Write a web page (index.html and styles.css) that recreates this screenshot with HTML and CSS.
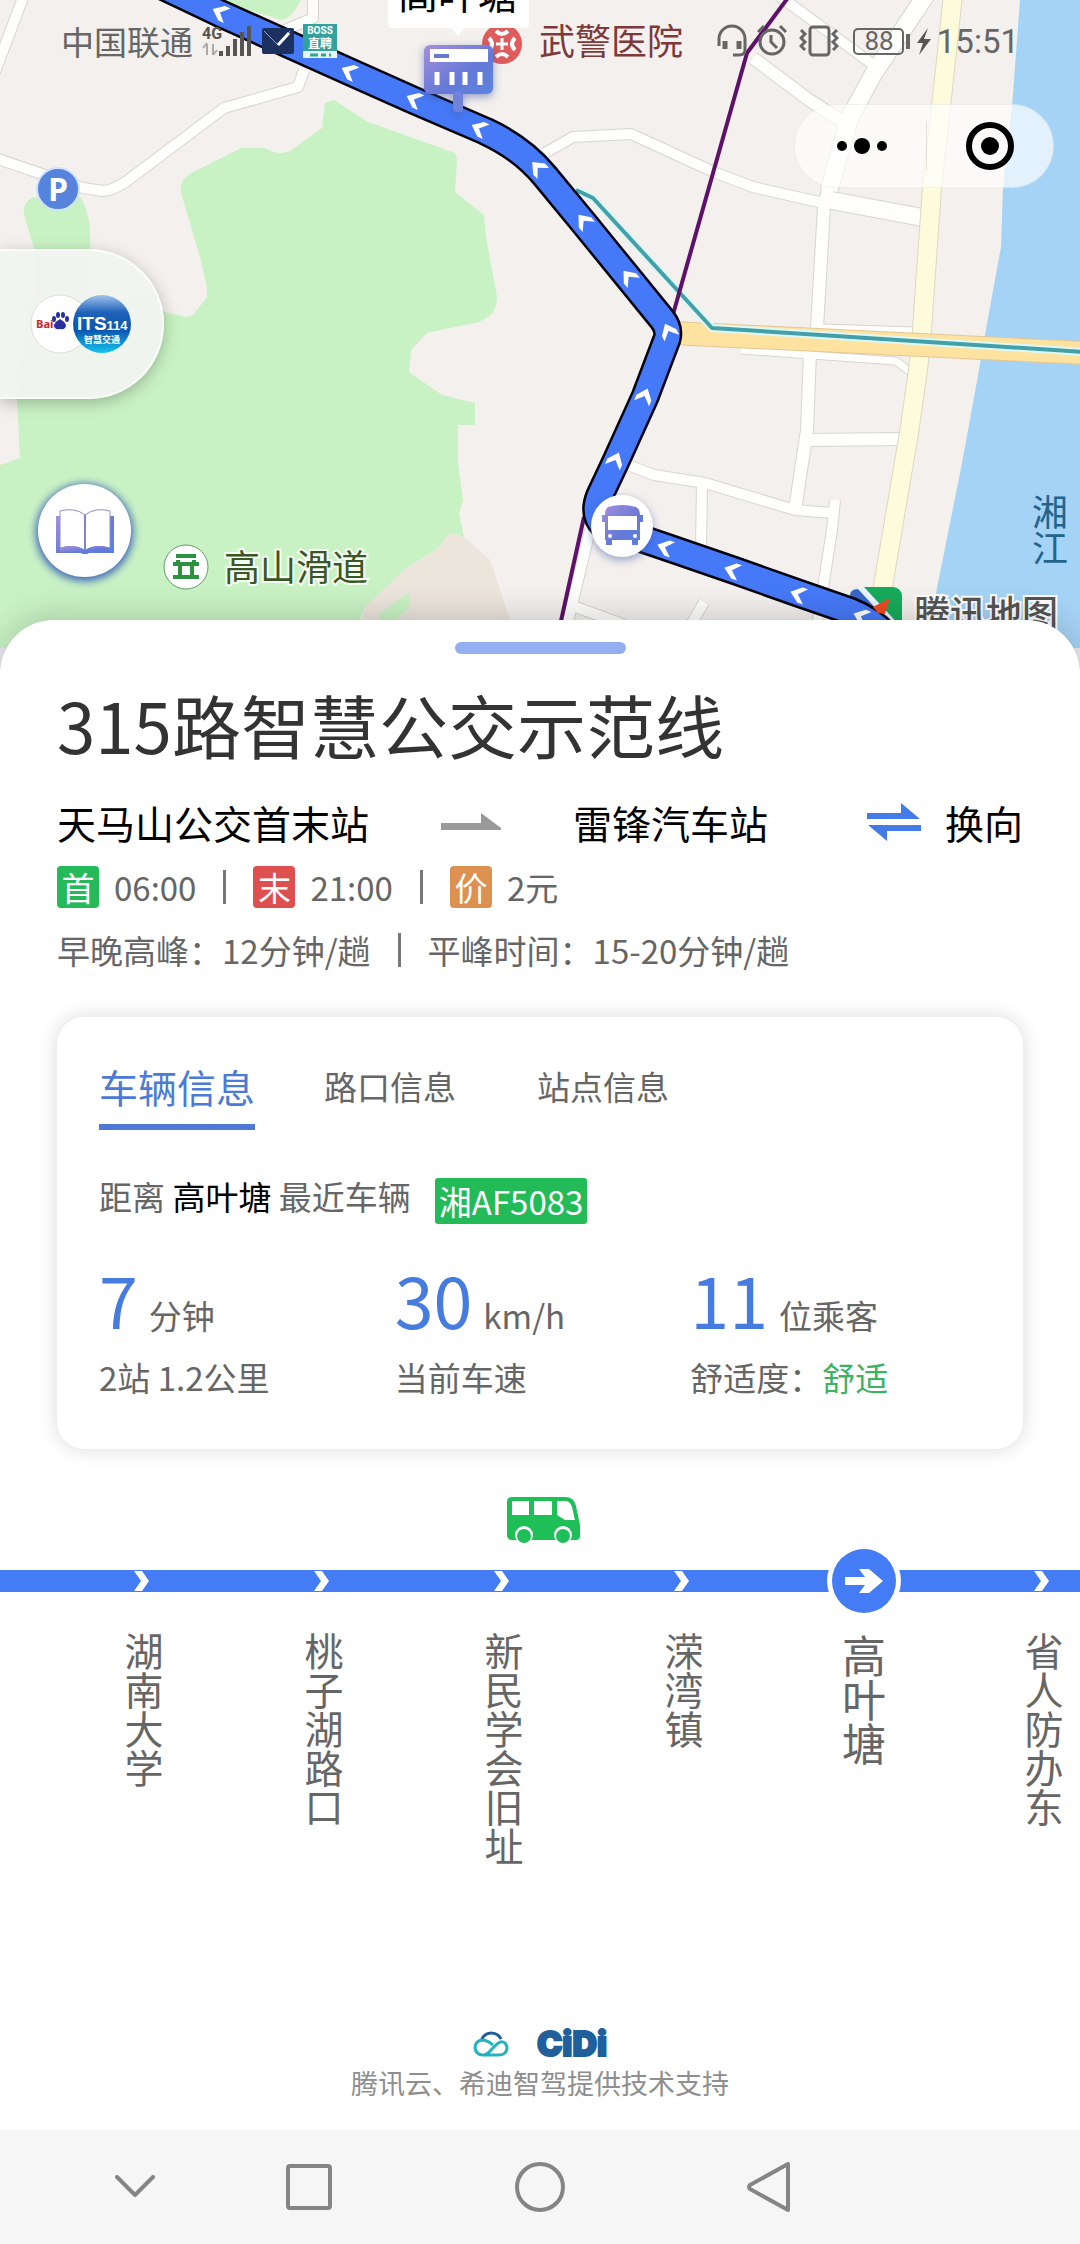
FILE: index.html
```html
<!DOCTYPE html>
<html lang="zh-CN">
<head>
  <meta charset="UTF-8">
  <meta name="viewport" content="width=device-width, initial-scale=1">
  <title>315路智慧公交示范线</title>
  <link rel="stylesheet" href="styles.css">
</head>
<body>

<section class="map">
  <svg class="map-canvas" viewBox="0 0 1080 648" preserveAspectRatio="xMidYMin slice">
    <defs>
      <linearGradient id="violet" x1="0" y1="0" x2="1" y2="1">
        <stop offset="0" stop-color="#a58fdc"/>
        <stop offset="0.6" stop-color="#6479d8"/>
        <stop offset="1" stop-color="#5b83e0"/>
      </linearGradient>
      <path id="arrow" d="M-7 0L3 -8H9L1 0L9 8H3Z"/>
    </defs>

    <!-- green areas -->
    <g class="green">
      <path d="M215 0L281 20Q292 18 301 0Z"/>
      <path d="M33 197Q22 203 24 215L34 248V300H90V248Q92 215 80 197Z"/>
      <path d="M325 103L334 100L368 122L455 153L457 160L455 192L484 215L486 237L497 297Q496 314 486 318L479 322L427 333L411 350L409 372L442 395L475 403V425H458V463L463 500L459 513L464 537L451 533L436 550L406 568L396 585L365 607L358 625V648H0V465L20 458L17 398L30 300H150L165 312L186 317L193 315L207 297V287L200 257L181 193Q178 180 193 172L241 148H265Q278 156 290 151L322 128Z"/>
    </g>
    <path class="hill" d="M404 570L436 550L451 533L464 537L490 560L510 620V640H358L365 607Z"/>
    <path class="green" d="M380 613L410 592V607L396 620H380Z"/>
    <path class="water" d="M1020 0L1012 107L1003 187L1001 247L986 329L979 370L962 463L936 593L926 648H1080V0Z"/>

    <!-- roads: grey casing first, then white fill -->
    <g class="road-casing">
      <path class="w10" d="M24 -5L-5 72"/>
      <path class="w10" d="M313 -5V18L285 30M304 70L298 87L224 108L127 181Q112 191 103 191L83 188L-5 158"/>
      <path class="w10" d="M545 153L573 137L631 134L716 173L753 187L819 202"/>
      <path class="w16" d="M829 200L925 218"/>
      <path class="w16" d="M926 -5L874 73L850 117L829 190"/>
      <path class="w12" d="M829 185L824 207L817 328L810 353L807 430L795 510"/>
      <path class="w10" d="M778 -5L871 63"/>
      <path class="w12" d="M753 58L809 100L842 121"/>
      <path class="w8" d="M822 328L914 331M741 350L896 361L914 375"/>
      <path class="w12" d="M808 440L904 439"/>
      <path class="w10" d="M628 465L654 475L705 483L795 510L833 513M702 483L701 548M835 500L832 530L818 620V648"/>
      <path class="w10" d="M570 605L625 625M704 602L685 635M590 530L566 630"/>
    </g>
    <g class="road-fill">
      <path class="w10" d="M24 -5L-5 72"/>
      <path class="w10" d="M313 -5V18L285 30M304 70L298 87L224 108L127 181Q112 191 103 191L83 188L-5 158"/>
      <path class="w10" d="M545 153L573 137L631 134L716 173L753 187L819 202"/>
      <path class="w16" d="M829 200L925 218"/>
      <path class="w16" d="M926 -5L874 73L850 117L829 190"/>
      <path class="w12" d="M829 185L824 207L817 328L810 353L807 430L795 510"/>
      <path class="w10" d="M778 -5L871 63"/>
      <path class="w12" d="M753 58L809 100L842 121"/>
      <path class="w8" d="M822 328L914 331M741 350L896 361L914 375"/>
      <path class="w12" d="M808 440L904 439"/>
      <path class="w10" d="M628 465L654 475L705 483L795 510L833 513M702 483L701 548M835 500L832 530L818 620V648"/>
      <path class="w10" d="M570 605L625 625M704 602L685 635M590 530L566 630"/>
    </g>
    <path class="yellow-casing" d="M953 -5L941 107L932 187L922 330L918 370L909 433L884 580L874 648"/>
    <path class="yellow-fill" d="M953 -5L941 107L932 187L922 330L918 370L909 433L884 580L874 648"/>
    <path class="orange-casing" d="M672 333L1085 353"/>
    <path class="orange-fill" d="M672 333L1085 353"/>

    <!-- metro lines -->
    <path class="teal-halo" d="M576 190L593 198L712 328L1085 352"/>
    <path class="teal" d="M576 190L593 198L712 328L1085 352"/>
    <path class="purple" d="M790 -5L747 53L672 318M584 517L559 630"/>

    <text class="water-label" x="1050" y="494">湘江</text>

    <g class="tencent">
      <rect x="850" y="587" width="52" height="56" rx="9" fill="#17ab5b"/>
      <path d="M850 596Q850 587 859 587H864L902 628V643H850Z" fill="#e8f4ff"/>
      <path d="M850 596Q850 589 858 589L902 637V643H850Z" fill="#3765c8"/>
    </g>

    <!-- bus route -->
    <path class="route-edge" d="M131 -29L219 13L348 71L413 100L485 131Q522 148 545 176L583 222L662 319Q670 329 667 339L645 397L616 461L600 495Q592 514 604 526L666 547L733 570L798 593L850 611Q872 620 884 634"/>
    <path class="route" d="M131 -29L219 13L348 71L413 100L485 131Q522 148 545 176L583 222L662 319Q670 329 667 339L645 397L616 461L600 495Q592 514 604 526L666 547L733 570L798 593L850 611Q872 620 884 634"/>
    <path d="M873 607L890 598L885 614L878 613Z" fill="#f04a23"/>
    <g fill="#fff">
      <use href="#arrow" transform="translate(219 12) rotate(25)"/>
      <use href="#arrow" transform="translate(348 71) rotate(25)"/>
      <use href="#arrow" transform="translate(413 99) rotate(25)"/>
      <use href="#arrow" transform="translate(478 128) rotate(25)"/>
      <use href="#arrow" transform="translate(537 167) rotate(46)"/>
      <use href="#arrow" transform="translate(583 220) rotate(50)"/>
      <use href="#arrow" transform="translate(628 276) rotate(50)"/>
      <use href="#arrow" transform="translate(668 330) rotate(65)"/>
      <use href="#arrow" transform="translate(645 395) rotate(112)"/>
      <use href="#arrow" transform="translate(616 459) rotate(114)"/>
      <use href="#arrow" transform="translate(664 547) rotate(19)"/>
      <use href="#arrow" transform="translate(731 570) rotate(19)"/>
      <use href="#arrow" transform="translate(797 594) rotate(19)"/>
      <use href="#arrow" transform="translate(860 616) rotate(22)"/>
    </g>

    <text class="tencent-label" x="914" y="627">腾讯地图</text>

    <!-- hospital -->
    <circle cx="502" cy="44" r="20" fill="#de5c5b"/>
    <g fill="none" stroke="#fff" stroke-width="4">
      <path d="M496 31Q502 37 508 31M496 57Q502 51 508 57M489 38Q495 44 489 50M515 38Q509 44 515 50"/>
    </g>
    <path d="M502 38V50M496 44H508" stroke="#fff" stroke-width="3"/>
    <text class="hospital-label" x="539" y="55">武警医院</text>

    <!-- parking -->
    <circle cx="58" cy="189" r="21" fill="#5684dc" stroke="#cfe2ff" stroke-width="2"/>
    <text class="parking-label" x="58" y="201">P</text>

    <!-- scenic spot -->
    <circle cx="186" cy="567" r="22" fill="#fff" stroke="#5f9f6c" stroke-width="1"/>
    <path d="M176 556H196M173 564H199M178 560V564M194 560V564M180 566V576M192 566V576M173 577H199" stroke="#2c9240" stroke-width="4" fill="none"/>
    <text class="scenic-label" x="224" y="581">高山滑道</text>

    <!-- selected stop -->
    <path d="M388 0H529V24Q529 28 525 28H465L458 36L451 28H392Q388 28 388 24Z" fill="#fff"/>
    <text class="stop-label" x="458" y="9">高叶塘</text>
    <g class="marker-shadow">
      <rect x="424" y="45" width="69" height="49" rx="6" fill="url(#violet)"/>
      <rect x="453" y="92" width="10" height="20" rx="3" fill="#6f83dc"/>
      <rect x="430" y="49" width="58" height="13" fill="#fff"/>
      <rect x="434" y="54" width="15" height="4" fill="#6a78cc"/>
      <path d="M437 72V85M452 72V85M465 72V85M480 72V85" stroke="#fff" stroke-width="5"/>
    </g>

    <!-- bus on the map -->
    <g class="marker-shadow">
      <circle cx="622" cy="526" r="31" fill="#fff"/>
      <path d="M608 507Q622 503 636 507Q640 509 640 515H643V522H640V540H638V545H632V540H612V545H606V540H605V522H602V515H605Q605 509 608 507Z" fill="url(#violet)"/>
      <rect x="608" y="516" width="29" height="14" fill="#fff"/>
      <circle cx="610" cy="536" r="2" fill="#fff"/>
      <circle cx="635" cy="536" r="2" fill="#fff"/>
    </g>
  </svg>

  <div class="status-bar">
    <span class="carrier">中国联通</span>
    <svg class="signal" width="50" height="34" viewBox="0 0 50 34">
      <text x="0" y="15" class="net">4G</text>
      <path d="M5 31V20M1 24L5 19M11 20V31M11 31L15 26" stroke="#aaa" stroke-width="2" fill="none"/>
      <path d="M19 32V27M26 32V22M33 32V15M40 32V8M47 32V2" stroke="#555" stroke-width="4"/>
    </svg>
    <svg class="mail" width="32" height="26" viewBox="0 0 32 26">
      <rect width="32" height="26" rx="2" fill="#1d3160"/>
      <path d="M2 3L16 17L28 3" stroke="#8fa3cc" stroke-width="1" fill="none"/>
      <path d="M16 17L27 5" stroke="#fff" stroke-width="3"/>
    </svg>
    <svg class="boss" width="34" height="34" viewBox="0 0 34 34">
      <rect width="34" height="34" fill="#33a29c"/>
      <rect y="27" width="34" height="7" fill="#e6f6f5"/>
      <text x="17" y="10" class="boss-text">BOSS</text>
      <text x="17" y="24" class="boss-cn">直聘</text>
      <path d="M7 31H15M18 31H23M26 31H28" stroke="#33a29c" stroke-width="3"/>
    </svg>
    <svg class="headset" width="30" height="34" viewBox="0 0 30 34" fill="none" stroke="#666" stroke-width="3">
      <path d="M2 22V15A13 13 0 0 1 28 15V26Q28 31 22 31H16"/>
      <path d="M8 17V25M22 17V25" stroke-width="5"/>
    </svg>
    <svg class="alarm" width="30" height="34" viewBox="0 0 30 34" fill="none" stroke="#666" stroke-width="3">
      <circle cx="15" cy="18" r="12"/>
      <path d="M14 11V18L20 24M1 8L7 2M29 8L23 2"/>
    </svg>
    <svg class="vibrate" width="40" height="34" viewBox="0 0 40 34" fill="none" stroke="#666" stroke-width="3">
      <rect x="11" y="3" width="19" height="28" rx="3"/>
      <path d="M2 6L6 10L2 14L6 18L2 22L6 26M38 6L34 10L38 14L34 18L38 22L34 26"/>
    </svg>
    <svg class="battery" width="80" height="34" viewBox="0 0 80 34">
      <rect x="1" y="5" width="49" height="25" rx="4" fill="none" stroke="#666" stroke-width="2"/>
      <text x="26" y="26" class="battery-text">88</text>
      <path d="M55 10V25" stroke="#666" stroke-width="4"/>
      <path d="M75 4L64 19H70L66 31L78 15H71Z" fill="#555"/>
    </svg>
    <time class="clock">15:51</time>
  </div>

  <div class="capsule">
    <button class="capsule-btn" aria-label="更多">
      <svg width="52" height="18" viewBox="0 0 52 18"><circle cx="6" cy="9" r="5"/><circle cx="26" cy="9" r="8"/><circle cx="46" cy="9" r="5"/></svg>
    </button>
    <button class="capsule-btn" aria-label="关闭">
      <svg width="48" height="48" viewBox="0 0 48 48"><circle cx="24" cy="24" r="21" fill="none" stroke="#000" stroke-width="6"/><circle cx="24" cy="24" r="9"/></svg>
    </button>
  </div>

  <div class="partners">
    <svg width="102" height="62" viewBox="0 0 102 62">
      <defs>
        <linearGradient id="its" x1="0" y1="0" x2="0" y2="1">
          <stop offset="0" stop-color="#9fc4ec"/>
          <stop offset="0.3" stop-color="#1f62b8"/>
          <stop offset="0.6" stop-color="#0b55b0"/>
          <stop offset="1" stop-color="#14c4ec"/>
        </linearGradient>
      </defs>
      <circle cx="30" cy="31" r="29" fill="#fff" stroke="#ddd"/>
      <text x="6" y="35" class="baidu-red">Bai</text>
      <g fill="#2a2fa0">
        <ellipse cx="24" cy="26" rx="2" ry="3"/><ellipse cx="28" cy="22" rx="2" ry="3"/>
        <ellipse cx="33" cy="22" rx="2" ry="3"/><ellipse cx="37" cy="26" rx="2" ry="3"/>
        <path d="M30 26Q34 28 36 32Q36 37 30 36Q24 37 24 32Q26 28 30 26Z"/>
      </g>
      <circle cx="72" cy="31" r="29" fill="url(#its)"/>
      <text x="47" y="37" class="its">ITS<tspan class="its-small">114</tspan></text>
      <text x="72" y="50" class="its-cn">智慧交通</text>
    </svg>
  </div>

  <button class="guide-btn" aria-label="指南">
    <svg width="60" height="46" viewBox="0 0 60 46">
      <path d="M1 8H6V38H54V8H59V45H34Q30 48 26 45H1Z" fill="url(#violet)"/>
      <path d="M5 3Q20 -1 30 7Q40 -1 55 3V40Q40 36 30 43Q20 36 5 40Z" fill="#fff" stroke="#8d8fc8" stroke-width="1"/>
      <path d="M5 40Q20 35 30 42Q40 35 55 40V44H34L30 46L26 44H5Z" fill="url(#violet)"/>
      <path d="M30 7V42" stroke="#7f83c8" stroke-width="2"/>
    </svg>
  </button>
</section>

<main class="sheet">
  <div class="handle"></div>
  <h1>315路智慧公交示范线</h1>

  <div class="direction">
    <span>天马山公交首末站</span>
    <svg class="to" width="60" height="18" viewBox="0 0 60 18"><path d="M0 10H40V0L60 15V17H0Z" fill="#999"/></svg>
    <span>雷锋汽车站</span>
    <button class="swap">
      <svg width="54" height="38" viewBox="0 0 54 38" fill="#437be8"><path d="M0 10H34V0L53 16H0ZM54 28H20V38L1 22H54Z"/></svg>
      换向
    </button>
  </div>

  <div class="times">
    <span class="badge first">首</span><span class="time">06:00</span>
    <i class="bar"></i>
    <span class="badge last">末</span><span class="time">21:00</span>
    <i class="bar"></i>
    <span class="badge price">价</span><span class="time">2元</span>
  </div>

  <div class="interval">
    <span>早晚高峰：12分钟/趟</span>
    <i class="bar"></i>
    <span>平峰时间：15-20分钟/趟</span>
  </div>

  <section class="card">
    <nav class="tabs">
      <button class="tab active">车辆信息</button>
      <button class="tab">路口信息</button>
      <button class="tab">站点信息</button>
    </nav>
    <div class="nearest">
      <span class="nearest-text">距离 <b>高叶塘</b> 最近车辆</span>
      <span class="plate">湘AF5083</span>
    </div>
    <div class="stats">
      <div class="stat">
        <p class="figure"><strong>7</strong> <span>分钟</span></p>
        <p class="note">2站 1.2公里</p>
      </div>
      <div class="stat">
        <p class="figure"><strong>30</strong> <span>km/h</span></p>
        <p class="note">当前车速</p>
      </div>
      <div class="stat">
        <p class="figure"><strong>11</strong> <span>位乘客</span></p>
        <p class="note">舒适度：<em>舒适</em></p>
      </div>
    </div>
  </section>

  <section class="line">
    <div class="bus-row">
      <svg width="73" height="47" viewBox="0 0 73 47">
        <path d="M5 0H58Q67 0 69 9L73 28V39Q73 43 69 43H5Q0 43 0 38V5Q0 0 5 0Z" fill="#1fbf58"/>
        <path d="M5 4H22V18H5ZM27 4H45V18H27ZM50 4H59Q63 4 65 10L68 23H58L50 18Z" fill="#fff"/>
        <circle cx="17" cy="38" r="9" fill="#fff"/><circle cx="56" cy="38" r="9" fill="#fff"/>
        <circle cx="17" cy="39" r="7" fill="#1fbf58"/><circle cx="56" cy="39" r="7" fill="#1fbf58"/>
      </svg>
    </div>
    <ul class="stations">
      <li><svg class="dot" viewBox="0 0 20 22"><path d="M0 1H8L15 11L8 21H0L7 11Z"/></svg><span>湖南大学</span></li>
      <li><svg class="dot" viewBox="0 0 20 22"><path d="M0 1H8L15 11L8 21H0L7 11Z"/></svg><span>桃子湖路口</span></li>
      <li><svg class="dot" viewBox="0 0 20 22"><path d="M0 1H8L15 11L8 21H0L7 11Z"/></svg><span>新民学会旧址</span></li>
      <li><svg class="dot" viewBox="0 0 20 22"><path d="M0 1H8L15 11L8 21H0L7 11Z"/></svg><span>溁湾镇</span></li>
      <li class="current">
        <svg class="dot" viewBox="0 0 74 74"><circle cx="37" cy="37" r="37" fill="#fff"/><circle cx="37" cy="37" r="32" fill="#437cf4"/><path d="M18 33H38L32 25H42L56 37L42 49H32L38 41H18Z"/></svg>
        <span>高叶塘</span>
      </li>
      <li><svg class="dot" viewBox="0 0 20 22"><path d="M0 1H8L15 11L8 21H0L7 11Z"/></svg><span>省人防办东</span></li>
    </ul>
  </section>

  <footer class="support">
    <div class="logos">
      <svg width="36" height="26" viewBox="0 0 36 26" fill="none" stroke-width="3">
        <path d="M8 10Q11 2 18 2Q25 2 28 8" stroke="#1f5f9c"/>
        <path d="M20 14Q14 9 9 9Q2 10 2 17Q3 24 10 24Q14 24 18 19L24 13Q28 9 32 12Q36 17 32 22Q30 24 26 24H12" stroke="#22b4bc"/>
      </svg>
      <span class="cidi">CiDi</span>
    </div>
    <p>腾讯云、希迪智驾提供技术支持</p>
  </footer>
</main>

<nav class="system-nav">
  <button aria-label="收起"><svg width="40" height="24" viewBox="0 0 40 24"><path d="M2 2L20 20L38 2"/></svg></button>
  <button aria-label="最近任务"><svg width="46" height="46" viewBox="0 0 46 46"><rect x="2" y="2" width="42" height="42" rx="2"/></svg></button>
  <button aria-label="主页"><svg width="50" height="50" viewBox="0 0 50 50"><circle cx="25" cy="25" r="23"/></svg></button>
  <button aria-label="返回"><svg width="44" height="50" viewBox="0 0 44 50"><path d="M41 2V48L3 27Q1 25 3 23Z"/></svg></button>
</nav>

</body>
</html>
```
FILE: styles.css
```css
* {
  box-sizing: border-box;
}

body {
  margin: 0;
  min-height: 100vh;
  display: flex;
  flex-direction: column;
  background: #e9e9ee;
  color: #666;
  font-family: "Noto Sans CJK SC", sans-serif;
  font-size: 33px;
}

h1, p, ul {
  margin: 0;
  padding: 0;
}

button {
  border: none;
  background: none;
  padding: 0;
  color: inherit;
  font: inherit;
  cursor: pointer;
}

svg {
  display: block;
}

/* map */
.map {
  position: relative;
  height: 648px;
  background: #f3f0ed;
  overflow: hidden;
}

.map-canvas {
  width: 100%;
  height: 100%;
}

.green { fill: #c9f2c4; }
.hill { fill: #ebe5dc; }
.water { fill: #a5d3f5; }

.road-casing, .road-fill {
  fill: none;
  stroke: #d8d5d1;
  stroke-linejoin: round;
}

.road-fill { stroke: #fefefc; }
.road-casing .w8 { stroke-width: 9px; }
.road-casing .w10 { stroke-width: 12px; }
.road-casing .w12 { stroke-width: 14px; }
.road-casing .w16 { stroke-width: 19px; }
.road-fill .w8 { stroke-width: 7px; }
.road-fill .w10 { stroke-width: 10px; }
.road-fill .w12 { stroke-width: 12px; }
.road-fill .w16 { stroke-width: 17px; }

.yellow-casing, .yellow-fill, .orange-casing, .orange-fill,
.teal, .teal-halo, .purple, .route, .route-edge {
  fill: none;
  stroke-linejoin: round;
}

.yellow-casing { stroke: #ddd8c0; stroke-width: 20px; }
.yellow-fill { stroke: #fefbdc; stroke-width: 18px; }
.orange-casing { stroke: #e3c795; stroke-width: 24px; }
.orange-fill { stroke: #fde2a0; stroke-width: 22px; }
.teal-halo { stroke: #def8f6; stroke-width: 8px; }
.teal { stroke: #43a0a8; stroke-width: 4px; }
.purple { stroke: #5e1168; stroke-width: 4px; }
.route-edge { stroke: #04040f; stroke-width: 29px; }
.route { stroke: #4679f7; stroke-width: 24px; }

.water-label {
  fill: #22648c;
  font-size: 36px;
  writing-mode: vertical-rl;
}

.hospital-label { fill: #7c3a3a; font-size: 36px; }
.stop-label { fill: #000; font-size: 40px; text-anchor: middle; }

.parking-label {
  fill: #fff;
  font-family: "Open Sans", sans-serif;
  font-size: 32px;
  font-weight: bold;
  text-anchor: middle;
}

.scenic-label, .tencent-label {
  fill: #3b5626;
  font-size: 36px;
  stroke: #f4fbf0;
  stroke-width: 4px;
  paint-order: stroke;
}

.tencent-label {
  fill: #555;
  stroke: #fff;
  font-weight: 500;
}

.marker-shadow {
  filter: drop-shadow(0 3px 4px rgba(60, 80, 160, 0.5));
}

/* status bar */
.status-bar {
  position: absolute;
  top: 16px;
  left: 0;
  right: 0;
  height: 50px;
  padding: 0 61px;
  display: flex;
  align-items: center;
}

.carrier { line-height: 50px; }
.signal { margin-left: 9px; }
.net { font: bold 16px Roboto, sans-serif; fill: #555; }
.mail { margin-left: 10px; }
.boss { margin-left: 9px; }
.boss-text { font: bold 10px Roboto, sans-serif; fill: #fff; text-anchor: middle; }
.boss-cn { font-size: 12px; font-weight: bold; fill: #fff; text-anchor: middle; }
.headset { margin-left: auto; }
.alarm { margin-left: 10px; }
.vibrate { margin-left: 12px; }
.battery { margin-left: 14px; }
.battery-text { font: 26px Roboto, sans-serif; fill: #666; text-anchor: middle; }

.clock {
  margin-left: 4px;
  font-family: Roboto, sans-serif;
  font-size: 33px;
}

.capsule {
  position: absolute;
  top: 104px;
  right: 26px;
  width: 260px;
  height: 84px;
  padding-left: 4px;
  border: 1px solid rgba(0, 0, 0, 0.05);
  border-radius: 42px;
  background: rgba(255, 255, 255, 0.68);
  display: flex;
  align-items: center;
}

.capsule-btn {
  flex: 1;
  height: 50px;
  display: flex;
  align-items: center;
  justify-content: center;
}

.capsule-btn + .capsule-btn { border-left: 1px solid rgba(0, 0, 0, 0.1); }

.partners {
  position: absolute;
  top: 249px;
  left: 0;
  height: 150px;
  padding: 0 30px;
  border: 2px solid #fafcf9;
  border-left: none;
  border-radius: 0 75px 75px 0;
  background: rgba(241, 243, 240, 0.95);
  box-shadow: 0 4px 16px rgba(0, 0, 0, 0.25);
  display: flex;
  align-items: center;
}

.baidu-red { font: bold 11px "Open Sans", sans-serif; fill: #d0202c; }
.its { font: bold 19px "Liberation Sans", sans-serif; fill: #fff; }
.its-small { font-size: 13px; }
.its-cn { font-size: 9px; font-weight: bold; fill: #fff; text-anchor: middle; }

.guide-btn {
  position: absolute;
  left: 38px;
  top: 484px;
  width: 93px;
  height: 93px;
  border-radius: 50%;
  background: #fff;
  box-shadow: 0 2px 8px 2px #3c62b8;
  display: flex;
  align-items: center;
  justify-content: center;
}

/* sheet */
.sheet {
  position: relative;
  flex: 1;
  margin-top: -28px;
  padding-top: 22px;
  border-radius: 54px 54px 0 0;
  background: #fff;
  box-shadow: 0 -6px 30px rgba(0, 0, 0, 0.16);
  display: flex;
  flex-direction: column;
}

.handle {
  width: 171px;
  height: 12px;
  margin: 0 auto;
  border-radius: 6px;
  background: #94aef2;
}

h1 {
  margin: 20px 57px 0;
  color: #333;
  font-size: 69px;
  font-weight: normal;
  line-height: 100px;
}

.direction {
  margin: 22px 57px 0;
  display: flex;
  align-items: center;
  color: #000;
  font-size: 39px;
  line-height: 52px;
}

.to { margin: 0 72px; }

.swap {
  margin-left: auto;
  display: flex;
  align-items: center;
  gap: 24px;
}

.times, .interval {
  margin: 18px 57px 0;
  display: flex;
  align-items: center;
  line-height: 42px;
}

.badge {
  width: 42px;
  height: 42px;
  border-radius: 4px;
  color: #fff;
  line-height: 42px;
  text-align: center;
}

.first { background: #25b95a; }
.last { background: #de504f; }
.price { background: #dc9150; }
.time { margin-left: 15px; }

.bar {
  width: 3px;
  height: 34px;
  margin: 0 27px;
  background: #777;
}

.interval { line-height: 48px; }

/* vehicle card */
.card {
  margin: 43px 57px 0;
  padding: 41px 37px 48px 42px;
  border-radius: 27px;
  background: #fff;
  box-shadow: 0 0 20px rgba(0, 0, 0, 0.15);
}

.tabs {
  display: flex;
  gap: 57px;
}

.tab {
  width: 156px;
  padding-bottom: 10px;
  border-bottom: 6px solid transparent;
  line-height: 56px;
  white-space: nowrap;
}

.tab.active {
  border-color: #4e78d6;
  color: #4b7bd5;
  font-size: 39px;
}

.nearest {
  margin-top: 48px;
  display: flex;
  align-items: flex-start;
  gap: 24px;
}

.nearest-text { line-height: 36px; }

.nearest b {
  color: #000;
  font-weight: normal;
}

.plate {
  padding: 0 4px;
  border-radius: 3px;
  background: #23bb58;
  color: #fff;
  line-height: 46px;
}

.stats {
  margin-top: 40px;
  display: grid;
  grid-template-columns: repeat(3, 1fr);
}

.figure {
  display: flex;
  align-items: baseline;
  gap: 11px;
  line-height: 36px;
}

.figure strong {
  color: #467be0;
  font-size: 70px;
  font-weight: normal;
  line-height: 70px;
}

.note {
  margin-top: 19px;
  line-height: 48px;
}

.note em {
  color: #3cb265;
  font-style: normal;
}

/* line with stations */
.line {
  margin-top: 48px;
  overflow: hidden;
}

.bus-row { padding-left: 507px; }

.stations {
  display: flex;
  padding-left: 54px;
  list-style: none;
  background: linear-gradient(#437cf4, #437cf4) 0 26px / 100% 22px no-repeat;
}

.stations li {
  flex: 0 0 180px;
  display: flex;
  flex-direction: column;
  align-items: center;
  font-size: 39px;
}

.stations span {
  writing-mode: vertical-rl;
  line-height: 48px;
}

.dot {
  width: 20px;
  height: 22px;
  margin: 26px 0 40px;
  fill: #fff;
}

.current .dot {
  width: 74px;
  height: 74px;
  margin: 0 0 16px;
}

.stations .current { font-size: 44px; }

/* footer */
.support {
  margin-top: auto;
  padding-bottom: 27px;
  color: #8e8e8e;
  font-size: 27px;
  line-height: 40px;
  text-align: center;
}

.logos {
  display: flex;
  align-items: center;
  justify-content: center;
  gap: 28px;
  margin-bottom: 6px;
}

.cidi {
  color: #1f5f9c;
  font: 900 34px/26px Inter, sans-serif;
  -webkit-text-stroke: 2px #1f5f9c;
}

.system-nav {
  position: relative;
  display: grid;
  grid-template-columns: 174fr 174fr 288fr 170fr;
  height: 114px;
  padding: 0 226px 0 48px;
  background: #f6f6f6;
}

.system-nav button {
  display: flex;
  align-items: center;
  justify-content: center;
}

.system-nav svg {
  fill: none;
  stroke: #858585;
  stroke-width: 4px;
  stroke-linejoin: round;
  stroke-linecap: round;
}
```
